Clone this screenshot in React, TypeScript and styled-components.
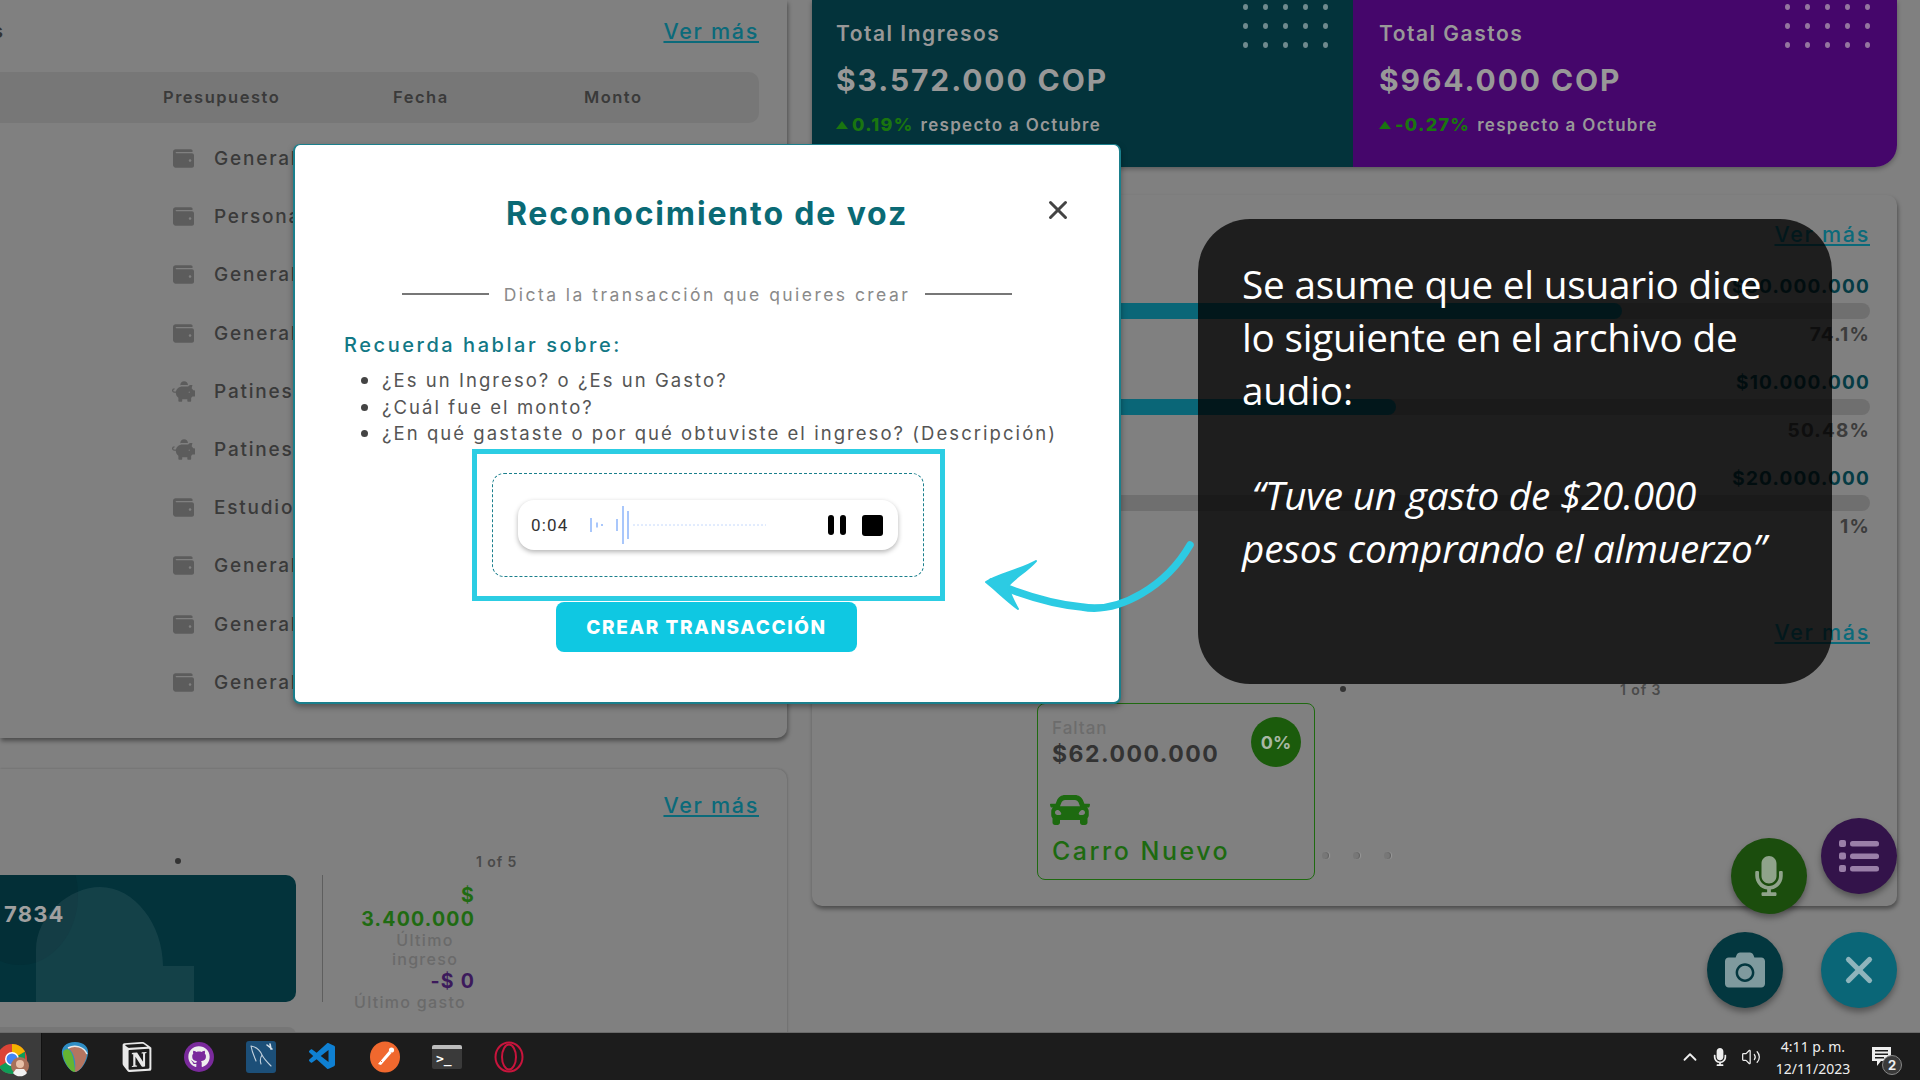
import React from "react";
import styled, { createGlobalStyle } from "styled-components";
import { FaWallet, FaPiggyBank, FaCar, FaMicrophone, FaCamera, FaGithub } from "react-icons/fa";
import { SiNotion } from "react-icons/si";
import { VscVscode } from "react-icons/vsc";
import { ChevronUp, Volume2, X } from "lucide-react";

const Global = createGlobalStyle`
  html, body { margin: 0; padding: 0; background: #808080; overflow: hidden; }
  * { box-sizing: border-box; }
`;

const ui = `Inter, "Liberation Sans", sans-serif`;

const Screen = styled.div`
  width: 1920px; height: 1080px; display: flex; flex-direction: column;
  position: relative; overflow: hidden; background: #808080; font-family: ${ui};
`;
const Dash = styled.div`
  height: 1033px; display: grid; grid-template-columns: 787px 1085px; column-gap: 25px; overflow: hidden;
`;
const Column = styled.div`display: flex; flex-direction: column;`;
const LeftTop = styled.section`
  height: 738px; padding: 19px 28px 0 0; border-radius: 0 0 10px 0;
  box-shadow: 1px 3px 4px rgba(0,0,0,.4);
`;
const LeftBottom = styled.section`
  margin-top: 31px; flex: 1; min-height: 0; padding: 24px 28px 0 0; border-radius: 0 10px 0 0;
  box-shadow: 1px 0 2px rgba(0,0,0,.12), 0 -1px 2px rgba(0,0,0,.05);
`;
const HeadRow = styled.div`display: flex; justify-content: space-between; align-items: center; height: 24px;`;
const ClippedTitle = styled.span`
  width: 3px; overflow: hidden; direction: rtl; white-space: nowrap; font-size: 20px; font-weight: 700; color: #333;
`;
const More = styled.a`
  font-size: 21.5px; font-weight: 500; letter-spacing: 1.7px; color: #0b6a7a; text-decoration: underline;
  margin-left: auto; line-height: 24px;
`;
const TableHead = styled.div`
  margin-top: 29px; height: 51px; background: #777; border-radius: 0 10px 10px 0;
  display: grid; grid-template-columns: 163px 230px 191px 1fr; align-items: center; padding-bottom: 1px;
  font-size: 16.5px; font-weight: 600; letter-spacing: 1.5px; color: #3a3a3a;
`;
const HeadCell = styled.span`grid-column: ${p => p.$col};`;
const Rows = styled.div`margin-top: 6.5px; display: flex; flex-direction: column;`;
const Row = styled.div`
  height: 58.2px; padding-left: 172px; display: flex; align-items: center; gap: 19px;
  font-size: 19px; font-weight: 500; letter-spacing: 1.8px; color: #3a3a3a;
  svg { width: 23px; height: 21px; color: #5c5c5c; flex: none; }
`;

const Carousel = styled.div`display: flex; align-items: center; height: 16px; margin-top: ${p => p.$top}px;`;
const Dot = styled.span`
  width: 6px; height: 6px; border-radius: 50%; background: #333; margin-left: ${p => p.$left}px;
`;
const Pager = styled.span`
  font-size: 14px; font-weight: 600; letter-spacing: .9px; color: #4a4a4a; margin-left: ${p => p.$left}px;
`;
const CardRow = styled.div`display: flex; height: 127px; margin-top: 6px;`;
const BankCard = styled.div`
  width: 296px; height: 127px; background: #03333b; border-radius: 0 10px 10px 0; position: relative; overflow: hidden;
  font-size: 22px; font-weight: 700; color: #a0a0a0; padding: 26px 0 0 4px; letter-spacing: 1.2px;
  svg { position: absolute; inset: 0; }
  span { position: relative; }
`;
const VRule = styled.div`width: 1px; height: 127px; background: #5e5e5e; margin-left: 26px;`;
const Stats = styled.div`
  width: 146px; margin-left: 6px; display: flex; flex-direction: column; align-items: flex-end; text-align: center;
  margin-top: 8px;
`;
const StatValue = styled.span`
  font-size: 19.5px; line-height: 24px; font-weight: 700; letter-spacing: 1.2px; color: ${p => p.$c};
`;
const StatLabel = styled.span`
  font-size: 16px; line-height: 19px; font-weight: 500; letter-spacing: 1.3px; color: #6a6a6a; width: ${p => p.$w}px;
`;
const NextCard = styled.div`
  width: 296px; height: 12px; margin-top: 25px; background: #767676; border-radius: 0 8px 0 0;
`;

const Totals = styled.div`display: grid; grid-template-columns: 541px 544px; height: 167px; overflow: hidden; border-radius: 0 0 22px 10px; box-shadow: 0 2px 5px rgba(0,0,0,.3);`;
const Total = styled.div`
  background: ${p => p.$bg}; padding: 22px 0 0 ${p => p.$pad}px; position: relative; color: #989898;
`;
const TotalLabel = styled.div`font-size: 21px; line-height: 24px; font-weight: 600; letter-spacing: 1.5px;`;
const TotalValue = styled.div`font-size: 30px; line-height: 36px; margin-top: 16px; font-weight: 700; letter-spacing: 1.9px;`;
const TotalNote = styled.div`
  margin-top: 17px; font-size: 17px; line-height: 20px; font-weight: 600; letter-spacing: 1.3px; display: flex; align-items: center; gap: 7px;
`;
const Tri = styled.i`width: 0; height: 0; border: 6px solid transparent; border-top: 0; border-bottom: 8px solid #1a7510; margin-right: -3px;`;
const Pct = styled.b`color: #1a7510; font-size: 18px; font-weight: 800;`;
const DotGrid = styled.div`
  position: absolute; top: 4px; right: ${p => p.$right}px; display: grid; grid-template-columns: repeat(5, 5px); gap: 13px 15px;
`;
const DotCell = styled.i`width: 5px; height: 6px; border-radius: 50%; background: ${p => p.$c};`;

const RightPanel = styled.section`
  margin-top: 28px; height: 711px; padding: 27px 27px 0 0; border-radius: 10px;
  box-shadow: 1px 3px 4px rgba(0,0,0,.4); display: flex; flex-direction: column;
`;
const Progress = styled.div`display: flex; flex-direction: column; gap: 24px; margin-top: 29px;`;
const ProgressItem = styled.div`display: flex; flex-direction: column; gap: 4px; align-items: flex-end;`;
const ProgText = styled.span`font-size: 19px; line-height: 24px; font-weight: 700; letter-spacing: 1.2px; color: ${p => p.$c};`;
const Track = styled.div`width: 800px; height: 16px; background: #6f6f6f; border-radius: 0 8px 8px 0; overflow: hidden;`;
const Fill = styled.div`height: 100%; background: #0a6677; border-radius: 0 8px 8px 0;`;
const Spacer = styled.div`height: ${p => p.$h}px;`;
const GoalRow = styled.div`display: flex; align-items: flex-end; margin-left: 225px; margin-top: 6px;`;
const Goal = styled.div`
  width: 278px; height: 177px; border: 1px solid #1f6a10; border-radius: 8px; padding: 14px 14px 0; position: relative;
`;
const GoalHint = styled.div`font-size: 17px; line-height: 20px; font-weight: 500; letter-spacing: 1px; color: #6c6c6c;`;
const GoalValue = styled.div`font-size: 23px; line-height: 28px; font-weight: 700; letter-spacing: 1.5px; color: #333; margin-top: 2px;`;
const GoalBadge = styled.div`
  position: absolute; top: 13px; right: 13px; width: 50px; height: 50px; border-radius: 50%; background: #1b5b0c;
  color: #a9b8a4; font-size: 18px; font-weight: 700; display: flex; align-items: center; justify-content: center;
`;
const GoalIcon = styled.div`margin-top: 22px; margin-left: -2px; height: 40px; color: #1d6a10; svg { width: 40px; height: 40px; display: block; }`;
const GoalName = styled.div`font-size: 25px; line-height: 30px; margin-top: 6px; font-weight: 500; letter-spacing: 2.5px; color: #1d6a10;`;
const PagerDots = styled.div`display: flex; gap: 24px; margin: 0 0 21px 7px;`;
const PagerDot = styled.i`width: 7px; height: 7px; border-radius: 50%; background: #777; box-shadow: -1px 0 1px rgba(0,0,0,.2) inset, 1px 0 1px #999;`;

const Fab = styled.div`
  position: absolute; left: ${p => p.$x - 38}px; top: ${p => p.$y - 38}px; width: 76px; height: 76px; border-radius: 50%;
  background: ${p => p.$bg}; color: ${p => p.$fg}; display: flex; align-items: center; justify-content: center;
  box-shadow: 0 4px 6px rgba(0,0,0,.35);
  svg { width: ${p => p.$s}px; height: ${p => p.$s}px; }
`;

const Modal = styled.div`
  position: absolute; left: 293px; top: 144px; width: 828px; height: 560px; background: #fff; border: 2px solid #1a7f8c;
  border-top-width: 1px; border-radius: 7px; padding: 46px 49px 0; box-shadow: 0 3px 6px rgba(0,0,0,.35);
  display: flex; flex-direction: column;
`;
const ModalHead = styled.div`display: grid; grid-template-columns: 1fr auto 1fr; align-items: center; height: 46px;`;
const ModalTitle = styled.h2`
  grid-column: 2; margin: 0; font-size: 32px; line-height: 46px; font-weight: 700; letter-spacing: 1.85px; color: #0a6a75; white-space: nowrap;
`;
const Close = styled.div`
  justify-self: end; margin-right: -3px; margin-top: -8px; color: #444; display: flex; svg { width: 30px; height: 30px; }
`;
const Sub = styled.div`
  margin-top: 45px; display: flex; justify-content: center; align-items: center; gap: 15px; height: 24px;
  font-size: 17.5px; letter-spacing: 2.45px; color: #8a8a8a; white-space: nowrap;
`;
const SubLine = styled.i`width: 87px; height: 1.5px; background: #777;`;
const Remember = styled.div`margin-top: 27px; height: 24px; font-size: 20px; line-height: 24px; font-weight: 500; letter-spacing: 2.55px; color: #127885;`;
const Hints = styled.ul`
  margin: 10px 0 0; padding: 0 0 0 38px; font-size: 18.5px; line-height: 26.5px; letter-spacing: 2.05px; color: #555; white-space: nowrap; height: 82px;
  list-style: none;
  li { position: relative; }
  li::before { content: ""; position: absolute; left: -21px; top: 10px; width: 7px; height: 7px; border-radius: 50%; background: #444; }
`;
const Highlight = styled.div`
  align-self: center; margin-left: 3px; width: 473px; height: 152px; border: 5px solid #2ccde3; padding: 19px 16px 19px 15px;
`;
const DropZone = styled.div`
  height: 104px; border: 1.5px dashed #1a7f8c; border-radius: 12px; display: flex; align-items: center; justify-content: center;
`;
const Recorder = styled.div`
  width: 380px; height: 50px; border-radius: 16px; background: #fff; box-shadow: 0 2px 5px rgba(0,0,0,.3);
  display: flex; align-items: center; padding: 0 15px 0 13px;
`;
const Time = styled.span`font-family: Roboto, sans-serif; font-size: 17px; letter-spacing: 1.2px; color: #333; width: 59px;`;
const Controls = styled.div`margin-left: auto; display: flex; align-items: center; gap: 16px;`;
const PauseBars = styled.div`display: flex; gap: 6px;`;
const PauseBar = styled.i`width: 6px; height: 20px; border-radius: 3px; background: #000;`;
const Stop = styled.i`width: 21px; height: 21px; border-radius: 3px; background: #000;`;
const Create = styled.button`
  align-self: center; margin-top: 1px; margin-left: -1px; width: 301px; height: 50px; border: 0; border-radius: 8px; background: #0fc8e2; color: #fff;
  font-family: ${ui}; font-size: 19px; font-weight: 800; letter-spacing: 1.6px;
`;

const Note = styled.div`
  position: absolute; left: 1198px; top: 219px; width: 634px; height: 465px; border-radius: 52px; background: rgba(0,0,0,.77);
  padding: 39px 30px 0 44px; font-family: "Open Sans", sans-serif; font-size: 38.7px; line-height: 53px; color: #fff; letter-spacing: -.2px;
`;
const NoteLine = styled.div`white-space: nowrap;`;
const NoteQuote = styled.div`margin-top: 52px; font-style: italic; white-space: pre;`;
const ArrowArt = styled.svg`position: absolute; left: 970px; top: 530px; width: 230px; height: 90px;`;

const Taskbar = styled.footer`
  height: 47px; background: #1c1c1c; display: flex; align-items: center; color: #fff; box-shadow: 0 -1px 0 #6a6a6a;
`;
const Active = styled.div`
  width: 42px; height: 47px; background: #3b3b3b; margin-right: 2px; flex: none; overflow: hidden; position: relative;
  border-right: 1px solid #111;
`;
const TaskIcon = styled.div`
  width: 62px; height: 47px; flex: none; display: flex; align-items: center; justify-content: center; color: ${p => p.$c || "#fff"};
  svg { width: ${p => p.$s || 30}px; height: ${p => p.$s || 32}px; }
`;
const GithubBubble = styled.div`
  width: 30px; height: 30px; border-radius: 50%; background: #7a2a9c; display: flex; align-items: center; justify-content: center; color: #eee;
  svg { width: 22px; height: 22px; }
`;
const Term = styled.div`
  width: 30px; height: 24px; border-radius: 2px; background: #3a3a3a; border-top: 4px solid #bbb; color: #fff;
  font: 700 13px/19px "DejaVu Sans Mono", monospace; padding-left: 4px; white-space: pre;
`;
const Tray = styled.div`
  margin-left: auto; padding-right: 15px; display: flex; align-items: center; height: 47px; color: #eee; position: relative;
`;
const TrayIcon = styled.div`
  width: ${p => p.$w}px; display: flex; justify-content: center; svg { width: ${p => p.$s}px; height: ${p => p.$s}px; }
`;
const Clock = styled.div`
  width: 92px; padding-top: 2px; text-align: center; font-family: "Noto Sans", sans-serif; font-size: 14px; line-height: 22px; color: #eee; white-space: nowrap;
`;
const Notif = styled.div`width: 46px; height: 47px; position: relative; display: flex; align-items: center; justify-content: center;`;
const Badge = styled.span`
  position: absolute; left: 23px; top: 22px; width: 20px; height: 20px; border-radius: 50%; background: #3a3a3a; border: 1px solid #888;
  font-size: 13px; font-weight: 700; line-height: 18px; text-align: center; color: #eee;
`;

const rows: [string, boolean][] = [
  ["General", false], ["Personal", false], ["General", false], ["General", false], ["Patines", true],
  ["Patines", true], ["Estudio", false], ["General", false], ["General", false], ["General", false],
];
const dots = Array.from({ length: 15 });

function Dots({ right, c }: { right: number; c: string }) {
  return <DotGrid $right={right}>{dots.map((_, i) => <DotCell key={i} $c={c} />)}</DotGrid>;
}

function Wave() {
  const bars: [number, number][] = [[0, 14], [6, 5], [11, 2], [26, 12], [32, 38], [37, 28]];
  return (
    <svg width="180" height="40" viewBox="0 0 180 40">
      {bars.map(([x, h]) => <rect key={x} x={x} y={20 - h / 2} width="2" height={h} fill="#a9c7fb" />)}
      <line x1="43" y1="20" x2="176" y2="20" stroke="#c4d8fc" strokeWidth="1" strokeDasharray="2 2" />
    </svg>
  );
}

function Chrome() {
  return (
    <svg width="48" height="47" viewBox="0 0 48 47" style={{ position: "absolute", left: -12, top: 0 }}>
      <circle cx="24" cy="26" r="15" fill="#db4437" />
      <path d="M24 26 L11 33.5 A15 15 0 0 0 24 41 Z" fill="#0f9d58" />
      <path d="M24 26 L24 41 A15 15 0 0 0 37 33.5 L37 18.5 Z" fill="#0f9d58" />
      <path d="M24 11 A15 15 0 0 1 37 18.5 L24 26 Z" fill="#f4b400" />
      <circle cx="24" cy="26" r="7" fill="#fff" />
      <circle cx="24" cy="26" r="5.5" fill="#4285f4" />
      <circle cx="32" cy="33" r="9" fill="#a8705a" />
      <circle cx="32" cy="31" r="4" fill="#e8c0a8" />
      <path d="M25 40 A9 9 0 0 0 39 40 L36 36 L28 36 Z" fill="#f1f1f1" />
    </svg>
  );
}

function Reaper() {
  return (
    <svg viewBox="0 0 30 32">
      <path d="M15 1 C24 1 29 6 28 13 C27 21 20 31 15 31 C10 31 3 21 2 13 C1 6 6 1 15 1 Z" fill="#2f8dc4" />
      <path d="M3 11 C6 6 11 8 13 16 C14 22 15 27 15 31 C10 31 3 20 3 11 Z" fill="#64b532" />
      <path d="M8 7 C16 3 26 8 27 13 C26 21 20 31 15 31 C16 22 15 12 8 7 Z" fill="#b57560" />
      <path d="M8 7 C15 3 24 6 27 13" fill="none" stroke="#e8e8e8" strokeWidth="1.5" />
    </svg>
  );
}

function Mysql() {
  return (
    <svg viewBox="0 0 30 32">
      <rect width="30" height="32" rx="3" fill="#1c4f78" />
      <path d="M5 5 C11 6 14 9 16 14 C18 18 21 21 25 25 M5 5 C6 11 8 15 10 20 M16 14 C14 17 14 20 15 23" fill="none" stroke="#c4d2de" strokeWidth="1.1" strokeLinecap="round" />
      <path d="M21 4 L26 8 M24 3 L25 8" stroke="#d8e2ea" strokeWidth="1.6" strokeLinecap="round" />
    </svg>
  );
}

function Postman() {
  return (
    <svg viewBox="0 0 30 32">
      <ellipse cx="15" cy="16" rx="15" ry="15.5" fill="#f0682e" />
      <path d="M8 23 L19 10 L21.5 12 L11 24 Z" fill="#fff" />
      <circle cx="21.5" cy="9" r="2.6" fill="#fff" />
      <path d="M9 18 L12 21" stroke="#f0682e" strokeWidth="1" />
    </svg>
  );
}

function Opera() {
  return (
    <svg viewBox="0 0 30 32" fill="none" stroke="#c8143c" strokeWidth="2">
      <ellipse cx="15" cy="16" rx="13.5" ry="14.5" />
      <ellipse cx="15" cy="16" rx="7" ry="12.5" />
    </svg>
  );
}

function Arrow() {
  return (
    <ArrowArt viewBox="0 0 230 90">
      <path d="M220 15 C197 55 150 84 112 77 C80 74 50 64 22 52" fill="none" stroke="#2ccbe3" strokeWidth="7.5" strokeLinecap="round" />
      <path d="M16 52 C28 44 50 40 66 31 C56 42 44 48 38 56 C40 64 44 72 48 79 C36 70 26 60 16 52 Z" fill="#2ccbe3" stroke="#2ccbe3" strokeWidth="2" strokeLinejoin="round" />
    </ArrowArt>
  );
}

function ListIcon() {
  return (
    <svg viewBox="0 0 40 40" fill="#9a7fa8">
      <rect x="0" y="4" width="7" height="7" rx="2" />
      <rect x="0" y="16.5" width="7" height="7" rx="2" />
      <rect x="0" y="29" width="7" height="7" rx="2" />
      <rect x="11" y="5" width="29" height="5.5" rx="2.5" />
      <rect x="11" y="17.5" width="29" height="5.5" rx="2.5" />
      <rect x="11" y="30" width="29" height="5.5" rx="2.5" />
    </svg>
  );
}

function NotifIcon() {
  return (
    <svg width="22" height="24" viewBox="0 0 22 24" fill="#eee">
      <path d="M1 2 H20 V16 H10 L6 21 V16 H1 Z" />
      <rect x="4" y="5" width="13" height="1.5" fill="#1c1c1c" />
      <rect x="4" y="8.5" width="13" height="1.5" fill="#1c1c1c" />
      <rect x="4" y="12" width="9" height="1.5" fill="#1c1c1c" />
    </svg>
  );
}

export default function App() {
  return (
    <Screen>
      <Global />
      <Dash>
        <Column>
          <LeftTop>
            <HeadRow>
              <ClippedTitle>Transacciones</ClippedTitle>
              <More>Ver más</More>
            </HeadRow>
            <TableHead>
              <HeadCell $col={2}>Presupuesto</HeadCell>
              <HeadCell $col={3}>Fecha</HeadCell>
              <HeadCell $col={4}>Monto</HeadCell>
            </TableHead>
            <Rows>
              {rows.map(([name, pig], i) => (
                <Row key={i}>
                  {pig ? <FaPiggyBank /> : <FaWallet />}
                  <span>{name}</span>
                </Row>
              ))}
            </Rows>
          </LeftTop>
          <LeftBottom>
            <HeadRow><More>Ver más</More></HeadRow>
            <Carousel $top={36}>
              <Dot $left={175} />
              <Pager $left={295}>1 of 5</Pager>
            </Carousel>
            <CardRow>
              <BankCard>
                <svg viewBox="0 0 296 127" width="296" height="127">
                  <ellipse cx="20" cy="20" rx="58" ry="70" fill="#032f37" />
                  <path d="M36 127 V75 C36 40 70 12 100 12 C135 12 163 50 163 91 H194 V127 Z" fill="#fff" opacity=".07" />
                </svg>
                <span>7834</span>
              </BankCard>
              <VRule />
              <Stats>
                <StatValue $c="#1f6b12">$</StatValue>
                <StatValue $c="#1f6b12">3.400.000</StatValue>
                <StatLabel $w={100}>Último ingreso</StatLabel>
                <StatValue $c="#3c1a5c">-$ 0</StatValue>
                <StatLabel $w={130}>Último gasto</StatLabel>
              </Stats>
            </CardRow>
            <NextCard />
          </LeftBottom>
        </Column>
        <Column>
          <Totals>
            <Total $bg="#03333b" $pad={24}>
              <Dots right={25} c="#6f8a8e" />
              <TotalLabel>Total Ingresos</TotalLabel>
              <TotalValue>$3.572.000 COP</TotalValue>
              <TotalNote><Tri /><Pct>0.19%</Pct> respecto a Octubre</TotalNote>
            </Total>
            <Total $bg="#45066b" $pad={26}>
              <Dots right={27} c="#94759f" />
              <TotalLabel>Total Gastos</TotalLabel>
              <TotalValue>$964.000 COP</TotalValue>
              <TotalNote><Tri /><Pct>-0.27%</Pct> respecto a Octubre</TotalNote>
            </Total>
          </Totals>
          <RightPanel>
            <HeadRow><More>Ver más</More></HeadRow>
            <Progress>
              <ProgressItem>
                <ProgText $c="#053b44">$30.000.000</ProgText>
                <Track><Fill style={{ width: "69%" }} /></Track>
                <ProgText $c="#3c3c3c">74.1%</ProgText>
              </ProgressItem>
              <ProgressItem>
                <ProgText $c="#053b44">$10.000.000</ProgText>
                <Track><Fill style={{ width: "40.8%" }} /></Track>
                <ProgText $c="#3c3c3c">50.48%</ProgText>
              </ProgressItem>
              <ProgressItem>
                <ProgText $c="#053b44">$20.000.000</ProgText>
                <Track />
                <ProgText $c="#3c3c3c">1%</ProgText>
              </ProgressItem>
            </Progress>
            <Spacer $h={81} />
            <HeadRow><More>Ver más</More></HeadRow>
            <Carousel $top={37}>
              <Dot $left={528} />
              <Pager $left={274}>1 of 3</Pager>
            </Carousel>
            <GoalRow>
              <Goal>
                <GoalHint>Faltan</GoalHint>
                <GoalValue>$62.000.000</GoalValue>
                <GoalBadge>0%</GoalBadge>
                <GoalIcon><FaCar /></GoalIcon>
                <GoalName>Carro Nuevo</GoalName>
              </Goal>
              <PagerDots><PagerDot /><PagerDot /><PagerDot /></PagerDots>
            </GoalRow>
          </RightPanel>
        </Column>
      </Dash>
      <Taskbar>
        <Active><Chrome /></Active>
        <TaskIcon><Reaper /></TaskIcon>
        <TaskIcon $c="#e8e8e8"><SiNotion /></TaskIcon>
        <TaskIcon><GithubBubble><FaGithub /></GithubBubble></TaskIcon>
        <TaskIcon><Mysql /></TaskIcon>
        <TaskIcon $c="#0f80d2" $s={32}><VscVscode /></TaskIcon>
        <TaskIcon><Postman /></TaskIcon>
        <TaskIcon><Term>{">_"}</Term></TaskIcon>
        <TaskIcon><Opera /></TaskIcon>
        <Tray>
          <TrayIcon $w={30} $s={22}><ChevronUp strokeWidth={2} /></TrayIcon>
          <TrayIcon $w={30} $s={18}><FaMicrophone /></TrayIcon>
          <TrayIcon $w={32} $s={20}><Volume2 strokeWidth={1.5} /></TrayIcon>
          <Clock>4:11 p. m.<br />12/11/2023</Clock>
          <Notif><NotifIcon /><Badge>2</Badge></Notif>
        </Tray>
      </Taskbar>

      <Fab $x={1859} $y={856} $bg="#33134a" $fg="#9a7fa8" $s={40}><ListIcon /></Fab>
      <Fab $x={1769} $y={876} $bg="#1b4d0d" $fg="#8fa38a" $s={40}><FaMicrophone /></Fab>
      <Fab $x={1745} $y={970} $bg="#03373f" $fg="#7f9a9e" $s={40}><FaCamera /></Fab>
      <Fab $x={1859} $y={970} $bg="#0a6677" $fg="#8fb4bc" $s={42}><X strokeWidth={3} /></Fab>

      <Modal>
        <ModalHead>
          <ModalTitle>Reconocimiento de voz</ModalTitle>
          <Close><X strokeWidth={2.4} /></Close>
        </ModalHead>
        <Sub><SubLine /><span>Dicta la transacción que quieres crear</span><SubLine /></Sub>
        <Remember>Recuerda hablar sobre:</Remember>
        <Hints>
          <li>¿Es un Ingreso? o ¿Es un Gasto?</li>
          <li>¿Cuál fue el monto?</li>
          <li>¿En qué gastaste o por qué obtuviste el ingreso? (Descripción)</li>
        </Hints>
        <Highlight>
          <DropZone>
            <Recorder>
              <Time>0:04</Time>
              <Wave />
              <Controls>
                <PauseBars><PauseBar /><PauseBar /></PauseBars>
                <Stop />
              </Controls>
            </Recorder>
          </DropZone>
        </Highlight>
        <Create>CREAR TRANSACCIÓN</Create>
      </Modal>

      <Note>
        <NoteLine>Se asume que el usuario dice</NoteLine>
        <NoteLine>lo siguiente en el archivo de</NoteLine>
        <NoteLine>audio:</NoteLine>
        <NoteQuote>{" “Tuve un gasto de $20.000\npesos comprando el almuerzo”"}</NoteQuote>
      </Note>
      <Arrow />
    </Screen>
  );
}
